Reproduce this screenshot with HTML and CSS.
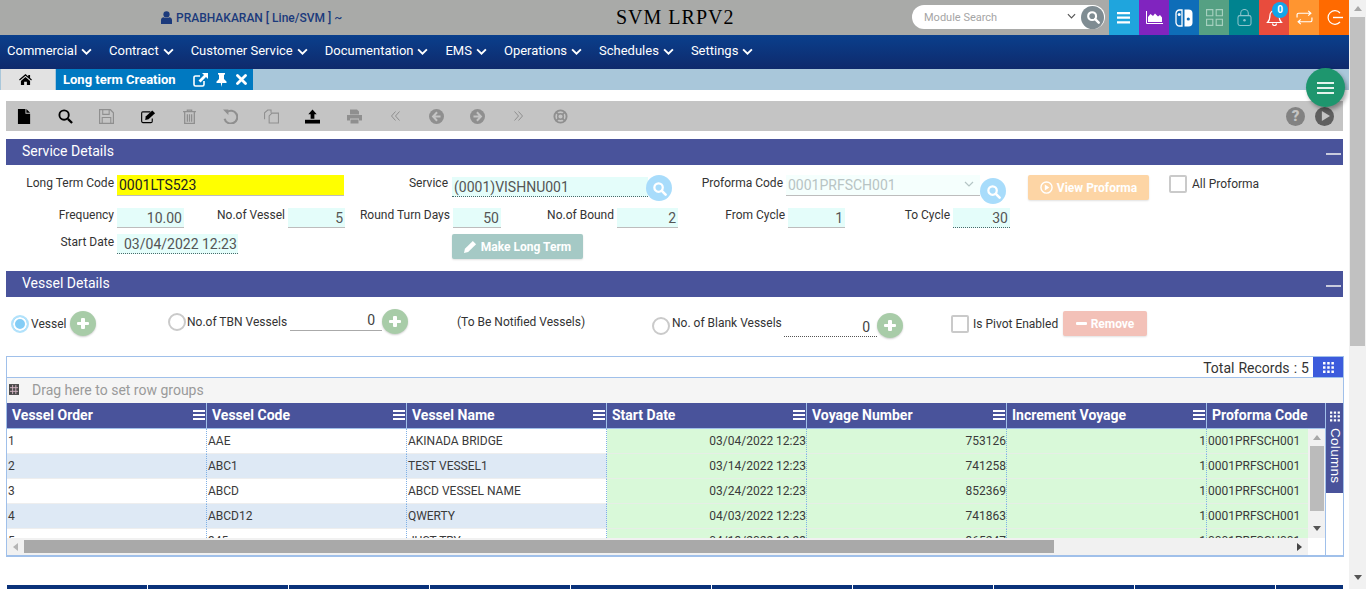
FILE: index.html
```html
<!DOCTYPE html>
<html lang="en">
<head>
    <meta charset="utf-8">
    <title>Long term Creation</title>
    <link rel="stylesheet" href="styles.css">
</head>
<body>
<div class="page">

    <header class="top-bar">
        <div class="user">
            <svg class="user-icon" viewBox="0 0 12 14"><circle cx="6" cy="3.6" r="3.4"/><path d="M0 14V9.8C0 7.8 1.4 6.9 3 6.7 4.6 8 7.4 8 9 6.7c1.600.2 3 1.100 3 3.100V14z"/></svg>
            <span>PRABHAKARAN [ Line/SVM ] ~</span>
        </div>
        <div class="app-title">SVM LRPV2</div>
        <div class="module-search">
            <span class="module-text">Module Search</span>
            <svg class="module-arrow" viewBox="0 0 10 6"><path d="M1 1l4 4 4-4" fill="none" stroke="#555" stroke-width="1.300"/></svg>
            <span class="module-btn">
                <svg viewBox="0 0 16 16"><circle cx="7" cy="7" r="4.500" fill="none" stroke="#fff" stroke-width="2.400"/><path d="M10.500 10.500l4 4" stroke="#fff" stroke-width="2.800" stroke-linecap="round"/></svg>
            </span>
        </div>
        <div class="tiles">
            <span class="tile tile-blue"><svg viewBox="0 0 14 12"><path d="M0 0h13v2.200H0zM0 4.600h13v2.200H0zM0 9.200h13v2.200H0z" fill="#fff"/></svg></span>
            <span class="tile tile-purple"><svg viewBox="0 0 17 13"><path d="M.5 0v12.500H17" fill="none" stroke="#fff"/><path d="M2 11V6l2.500-3 2.500 2 2-2.500 3 3 2-1.500 2 2.500V11z" fill="#fff"/></svg></span>
            <span class="tile tile-navy"><svg class="icon-switch" viewBox="0 0 18 18"><path d="M7 1H4.500A3.500 3.500 0 0 0 1 4.500v9A3.500 3.500 0 0 0 4.500 17H7z" fill="none" stroke="#fff" stroke-width="1.300"/><circle cx="4.200" cy="5.500" r="1.500" fill="#fff"/><path d="M9.500 .5h4A4 4 0 0 1 17.500 4.500v9a4 4 0 0 1-4 4h-4z" fill="#fff"/><circle cx="13.300" cy="10" r="1.600" fill="#0e6db8"/></svg></span>
            <span class="tile tile-green"><svg class="icon-large" viewBox="0 0 15 15"><path d="M.5.5h5.500v5.500H.5zM9 .5h5.500v5.500H9zM.5 9h5.500v5.500H.5zM9 9h5.500v5.500H9z" fill="none" stroke="#a6d0bf"/></svg></span>
            <span class="tile tile-teal"><svg class="icon-large" viewBox="0 0 15 18"><rect x=".6" y="7" width="13.800" height="10.400" rx="2" fill="none" stroke="#8cc4cc" stroke-width="1.100"/><path d="M3.500 7V4.500a4 4 0 0 1 8 0V7" fill="none" stroke="#8cc4cc" stroke-width="1.100"/><circle cx="7.500" cy="12" r="1.300" fill="#8cc4cc"/></svg></span>
            <span class="tile tile-red">
                <svg class="icon-large" viewBox="0 0 16 17"><path d="M8 1.500a4.500 4.500 0 0 0-4.500 4.500c0 4-1 6-2.500 7.500h14C13.500 12 12.500 10 12.500 6A4.500 4.500 0 0 0 8 1.500zM6 14.500a2 2 0 0 0 4 0" fill="none" stroke="#fff" stroke-width="1.200"/></svg>
                <span class="badge">0</span>
            </span>
            <span class="tile tile-orange"><svg class="icon-large" viewBox="0 0 16 14"><path d="M1 7V4.500A1.500 1.500 0 0 1 2.500 3H14M11.500 .8L14 3l-2.500 2.200M15 7v2.500A1.500 1.500 0 0 1 13.500 11H2M4.500 8.800L2 11l2.500 2.200" fill="none" stroke="#fff" stroke-width="1.100"/></svg></span>
            <span class="tile tile-flame"><svg class="icon-large" viewBox="0 0 17 17"><path d="M14 4a6.800 6.800 0 1 0 0 9" fill="none" stroke="#fff" stroke-width="1.200"/><path d="M7 8.500h10" stroke="#fff" stroke-width="1.400"/></svg></span>
        </div>
    </header>

    <nav class="main-nav">
        <a class="nav-item">Commercial <svg viewBox="0 0 10 6"><path d="M1 1l4 4 4-4"/></svg></a>
        <a class="nav-item">Contract <svg viewBox="0 0 10 6"><path d="M1 1l4 4 4-4"/></svg></a>
        <a class="nav-item">Customer Service <svg viewBox="0 0 10 6"><path d="M1 1l4 4 4-4"/></svg></a>
        <a class="nav-item">Documentation <svg viewBox="0 0 10 6"><path d="M1 1l4 4 4-4"/></svg></a>
        <a class="nav-item">EMS <svg viewBox="0 0 10 6"><path d="M1 1l4 4 4-4"/></svg></a>
        <a class="nav-item">Operations <svg viewBox="0 0 10 6"><path d="M1 1l4 4 4-4"/></svg></a>
        <a class="nav-item">Schedules <svg viewBox="0 0 10 6"><path d="M1 1l4 4 4-4"/></svg></a>
        <a class="nav-item">Settings <svg viewBox="0 0 10 6"><path d="M1 1l4 4 4-4"/></svg></a>
    </nav>

    <div class="tab-strip">
        <div class="tab-home"><svg viewBox="0 0 14 12"><path d="M7 0L0 6l.8 1L7 1.800 13.200 7l.8-1-2-1.700V1h-2v1.600zM2 7.500V12h3.500V8.500h3V12H12V7.500L7 3.300z"/></svg></div>
        <div class="tab-active">
            <span class="tab-title">Long term Creation</span>
            <svg class="tab-link" viewBox="0 0 15 14"><path d="M11 8v3.500a1.500 1.500 0 0 1-1.500 1.500h-7A1.500 1.500 0 0 1 1 11.500v-7A1.500 1.500 0 0 1 2.500 3H7" fill="none" stroke="#fff" stroke-width="1.600"/><path d="M9 0h6v6l-2-2-5.500 5.500-2-2L11 2z" fill="#fff"/></svg>
            <svg class="tab-pin" viewBox="0 0 11 14"><path d="M2 0h7v1.200L8 2v4l2.500 2.500V10H6.200L5.500 14 4.800 10H.5V8.500L3 6V2L2 1.200z" fill="#fff"/></svg>
            <svg class="tab-close" viewBox="0 0 11 11"><path d="M1.500 1.500l8 8M9.500 1.500l-8 8" stroke="#fff" stroke-width="2.800" stroke-linecap="round"/></svg>
        </div>
    </div>

    <div class="fab"><svg viewBox="0 0 17 12"><path d="M0 0h17v2H0zM0 5h17v2H0zM0 10h17v2H0z" fill="#e4f3ec"/></svg></div>

    <main class="content">
        <div class="toolbar">
            <div class="tool-group">
                <span class="tool"><svg viewBox="0 0 14 16"><path d="M0 0h8v5h5v11H0zM9 0l4 4H9z" fill="#000"/></svg></span>
                <span class="tool"><svg viewBox="0 0 16 16"><circle cx="6.500" cy="6.500" r="5" fill="none" stroke="#000" stroke-width="2"/><path d="M10.500 10.500l4.500 4.500" stroke="#000" stroke-width="2.400"/></svg></span>
                <span class="tool"><svg viewBox="0 0 14 14"><path d="M.5.5h10l3 3v10H.5z" fill="none" stroke="#8f8f8f" stroke-width="1.200"/><path d="M3.500 1v4h6V1M3 13V8h8v5" fill="none" stroke="#8f8f8f"/></svg></span>
                <span class="tool"><svg viewBox="0 0 16 14"><path d="M12 9v3a1.500 1.500 0 0 1-1.500 1.500h-8.500A1.500 1.500 0 0 1 .7 12V3.500A1.500 1.500 0 0 1 2 2h8" fill="none" stroke="#000" stroke-width="1.200"/><path d="M5 7l7-6.500 3 3-7 6.500-3.500.8z" fill="#000"/></svg></span>
                <span class="tool"><svg viewBox="0 0 12 14"><path d="M0 2.500h12M4 2.500V1h4v1.500M1.500 3v10.500h9V3M4 5v7M6 5v7M8 5v7" fill="none" stroke="#8f8f8f" stroke-width="1.200"/></svg></span>
                <span class="tool"><svg viewBox="0 0 14 14"><path d="M3.500 3A6 6 0 1 1 1.500 9" fill="none" stroke="#8f8f8f" stroke-width="2"/><path d="M0 .5h5v5z" fill="#8f8f8f"/></svg></span>
                <span class="tool"><svg viewBox="0 0 16 15"><path d="M.6 10.500V3.500L4 .6h3.500v3M5.500 14.400V6.800L8.500 3.900h6.900v10.500z" fill="none" stroke="#8f8f8f" stroke-width="1.100"/></svg></span>
                <span class="tool"><svg viewBox="0 0 16 15"><path d="M8 0l4.500 5H10v5H6V5H3.500z" fill="#000"/><path d="M0 11h16v4H0z" fill="#000"/></svg></span>
                <span class="tool"><svg viewBox="0 0 15 14"><path d="M3 5V0h7l2 2v3M0 5.500h15V11h-3V9H3v2H0zM3.500 10h8v4h-8z" fill="#8f8f8f"/></svg></span>
                <span class="tool"><svg class="icon-small" viewBox="0 0 9 10"><path d="M4.500 .5L.5 5l4 4.500M8.500 .5L4.500 5l4 4.500" fill="none" stroke="#8f8f8f"/></svg></span>
                <span class="tool"><svg viewBox="0 0 13 13"><circle cx="6.500" cy="6.500" r="6.500" fill="#8f8f8f"/><path d="M7 2.800L3.500 6.500 7 10.200M4 6.500h6" fill="none" stroke="#c4c4c4" stroke-width="1.700"/></svg></span>
                <span class="tool"><svg viewBox="0 0 13 13"><circle cx="6.500" cy="6.500" r="6.500" fill="#8f8f8f"/><path d="M6 2.800l3.500 3.700L6 10.200M9 6.500H3" fill="none" stroke="#c4c4c4" stroke-width="1.700"/></svg></span>
                <span class="tool"><svg class="icon-small" viewBox="0 0 9 10"><path d="M.5 .5l4 4.500-4 4.500M4.500 .5l4 4.500-4 4.500" fill="none" stroke="#8f8f8f"/></svg></span>
                <span class="tool"><svg viewBox="0 0 16 16"><circle cx="8" cy="8" r="6.500" fill="none" stroke="#8f8f8f" stroke-width="2"/><circle cx="8" cy="8" r="3" fill="none" stroke="#8f8f8f" stroke-width="1.500"/><path d="M3 3l3 3M13 3l-3 3M3 13l3-3M13 13l-3-3" stroke="#8f8f8f" stroke-width="1.800"/></svg></span>
            </div>
            <div class="tool-right">
                <span class="round-help">?</span>
                <span class="round-play"><svg viewBox="0 0 10 11"><path d="M1 0l9 5.500L1 11z" fill="#c4c4c4"/></svg></span>
            </div>
        </div>

        <section class="panel">
            <div class="panel-head"><span>Service Details</span><i class="collapse"></i></div>
            <div class="service-body">
                <div class="row-one">
                    <label class="lbl">Long Term Code</label>
                    <div class="inp inp-yellow">0001LTS523</div>
                    <label class="lbl lbl-service">Service</label>
                    <div class="inp inp-dotted inp-service">(0001)VISHNU001</div>
                    <span class="search-round search-first"><svg viewBox="0 0 16 16"><circle cx="7" cy="7" r="4.500" fill="none" stroke="#fff" stroke-width="2.400"/><path d="M10.500 10.500l4 4" stroke="#fff" stroke-width="2.800" stroke-linecap="round"/></svg></span>
                    <label class="lbl">Proforma Code</label>
                    <div class="inp inp-select">0001PRFSCH001<svg viewBox="0 0 10 6"><path d="M1 1l4 4 4-4" fill="none" stroke="#b5c5c5" stroke-width="1.200"/></svg></div>
                    <span class="search-round search-second"><svg viewBox="0 0 16 16"><circle cx="7" cy="7" r="4.500" fill="none" stroke="#fff" stroke-width="2.400"/><path d="M10.500 10.500l4 4" stroke="#fff" stroke-width="2.800" stroke-linecap="round"/></svg></span>
                    <span class="btn btn-peach"><svg viewBox="0 0 14 14"><circle cx="7" cy="7" r="6" fill="none" stroke="#fff" stroke-width="1.500"/><path d="M5.200 3.800L10 7l-4.800 3.200z" fill="#fff"/></svg>View Proforma</span>
                    <span class="check check-all"></span>
                    <span class="check-text">All Proforma</span>
                </div>
                <div class="row-two">
                    <label class="lbl">Frequency</label>
                    <div class="inp inp-num">10.00</div>
                    <label class="lbl">No.of Vessel</label>
                    <div class="inp inp-num">5</div>
                    <label class="lbl">Round Turn Days</label>
                    <div class="inp inp-num">50</div>
                    <label class="lbl">No.of Bound</label>
                    <div class="inp inp-num">2</div>
                    <label class="lbl">From Cycle</label>
                    <div class="inp inp-num">1</div>
                    <label class="lbl">To Cycle</label>
                    <div class="inp inp-num inp-dotted">30</div>
                </div>
                <div class="row-three">
                    <label class="lbl">Start Date</label>
                    <div class="inp inp-dotted inp-date">03/04/2022 12:23</div>
                    <span class="btn btn-teal"><svg viewBox="0 0 14 14"><path d="M0 14l1-4.500L9.500 1 13 4.500 4.500 13z" fill="#fff"/></svg>Make Long Term</span>
                </div>
            </div>
        </section>

        <section class="panel">
            <div class="panel-head"><span>Vessel Details</span><i class="collapse"></i></div>
            <div class="vessel-body">
                <div class="vessel-opt opt-vessel">
                    <span class="radio radio-on"></span><span class="opt-text">Vessel</span>
                    <span class="plus"></span>
                </div>
                <div class="vessel-opt opt-tbn">
                    <span class="radio"></span><span class="opt-text">No.of TBN Vessels</span>
                    <span class="count">0</span>
                    <span class="plus"></span>
                </div>
                <span class="tbn-note">(To Be Notified Vessels)</span>
                <div class="vessel-opt opt-blank">
                    <span class="radio"></span><span class="opt-text">No. of Blank Vessels</span>
                    <span class="count count-dotted">0</span>
                    <span class="plus"></span>
                </div>
                <div class="vessel-opt opt-pivot">
                    <span class="check"></span><span class="opt-text">Is Pivot Enabled</span>
                    <span class="btn btn-rose"><i class="minus"></i>Remove</span>
                </div>
            </div>
        </section>

        <section class="grid-box">
            <div class="grid-top">
                <span>Total Records : 5</span>
                <span class="grid-menu"><svg viewBox="0 0 11 11"><path d="M0 0h2.500v2.500H0zM4.200 0h2.500v2.500H4.200zM8.400 0h2.500v2.500H8.400zM0 4.200h2.500v2.500H0zM4.200 4.200h2.500v2.500H4.200zM8.400 4.200h2.500v2.500H8.400zM0 8.400h2.500v2.500H0zM4.200 8.400h2.500v2.500H4.200zM8.400 8.400h2.500v2.500H8.400z" fill="#fff"/></svg></span>
            </div>
            <div class="group-bar">
                <svg viewBox="0 0 11 12"><path d="M0 0h11v12H0z" fill="#4a4a4a"/><path d="M4 1v10M7.500 1v10M1 4h9M1 8h9" stroke="#d8b8c8" stroke-width="1"/></svg>
                <span>Drag here to set row groups</span>
            </div>
            <div class="grid-main">
                <div class="grid-left">
                    <div class="grid-head">
                        <div class="hcell">Vessel Order<i class="hmenu"></i></div>
                        <div class="hcell">Vessel Code<i class="hmenu"></i></div>
                        <div class="hcell">Vessel Name<i class="hmenu"></i></div>
                        <div class="hcell">Start Date<i class="hmenu"></i></div>
                        <div class="hcell">Voyage Number<i class="hmenu"></i></div>
                        <div class="hcell">Increment Voyage<i class="hmenu"></i></div>
                        <div class="hcell hcell-last">Proforma Code</div>
                    </div>
                    <div class="grid-view">
                        <div class="grid-rows">
                            <div class="grow"><div class="c">1</div><div class="c">AAE</div><div class="c">AKINADA BRIDGE</div><div class="c g r">03/04/2022 12:23</div><div class="c g r">753126</div><div class="c g r">1</div><div class="c g">0001PRFSCH001</div></div>
                            <div class="grow alt"><div class="c">2</div><div class="c">ABC1</div><div class="c">TEST VESSEL1</div><div class="c g r">03/14/2022 12:23</div><div class="c g r">741258</div><div class="c g r">1</div><div class="c g">0001PRFSCH001</div></div>
                            <div class="grow"><div class="c">3</div><div class="c">ABCD</div><div class="c">ABCD VESSEL NAME</div><div class="c g r">03/24/2022 12:23</div><div class="c g r">852369</div><div class="c g r">1</div><div class="c g">0001PRFSCH001</div></div>
                            <div class="grow alt"><div class="c">4</div><div class="c">ABCD12</div><div class="c">QWERTY</div><div class="c g r">04/03/2022 12:23</div><div class="c g r">741863</div><div class="c g r">1</div><div class="c g">0001PRFSCH001</div></div>
                            <div class="grow"><div class="c">5</div><div class="c">345</div><div class="c">JUST TRY</div><div class="c g r">04/13/2022 12:23</div><div class="c g r">365247</div><div class="c g r">1</div><div class="c g">0001PRFSCH001</div></div>
                        </div>
                        <div class="v-scroll">
                            <i class="arrow-up arrow-muted"></i>
                            <i class="v-thumb"></i>
                            <i class="arrow-down"></i>
                        </div>
                    </div>
                    <div class="h-row">
                        <div class="h-scroll">
                            <i class="arrow-left"></i>
                            <i class="h-thumb"></i>
                            <i class="arrow-right"></i>
                        </div>
                    </div>
                </div>
                <aside class="side-tools">
                    <div class="side-tab">
                        <svg viewBox="0 0 11 11"><path d="M0 0h2.500v2.500H0zM4.200 0h2.500v2.500H4.200zM8.400 0h2.500v2.500H8.400zM0 4.200h2.500v2.500H0zM4.200 4.200h2.500v2.500H4.200zM8.400 4.200h2.500v2.500H8.400zM0 8.400h2.500v2.500H0zM4.200 8.400h2.500v2.500H4.200zM8.400 8.400h2.500v2.500H8.400z" fill="#fff"/></svg>
                        <span>Columns</span>
                    </div>
                </aside>
            </div>
        </section>

        <div class="bottom-band">
            <i></i><i></i><i></i><i></i><i></i><i></i><i></i><i></i><i></i><i></i>
        </div>
    </main>
</div>

<div class="page-scroll">
    <i class="arrow-up arrow-muted"></i>
    <i class="page-thumb"></i>
    <i class="arrow-down"></i>
</div>
</body>
</html>
```

FILE: styles.css
```css
* {
    box-sizing: border-box;
}

html, body {
    margin: 0;
    height: 589px;
    overflow: hidden;
}

body {
    display: flex;
    font-family: Roboto, "Liberation Sans", sans-serif;
    font-size: 12px;
    color: #333;
    background: #fff;
}

svg {
    display: block;
}

.page {
    position: relative;
    width: 1349px;
    height: 589px;
    overflow: hidden;
}

/* top bar */
.top-bar {
    display: flex;
    align-items: center;
    height: 35px;
    background: #a9aaa8;
}

.user {
    display: flex;
    align-items: center;
    gap: 4px;
    width: 616px;
    padding-left: 161px;
    font-size: 12px;
    font-weight: 500;
    color: #1b3a7c;
}

.user-icon {
    width: 11px;
    height: 13px;
    fill: #1b3a7c;
}

.app-title {
    width: 296px;
    font-family: "Liberation Serif", serif;
    font-size: 20px;
    letter-spacing: 1px;
    color: #000;
}

.module-search {
    display: flex;
    align-items: center;
    width: 193px;
    height: 24px;
    margin-top: -1px;
    padding: 0 1px 0 12px;
    background: #fff;
    border-radius: 12px;
}

.module-text {
    flex: 1;
    font-size: 11px;
    color: #a5a5a5;
}

.module-arrow {
    width: 9px;
    height: 6px;
    margin: -3px 5px 0 0;
}

.module-btn {
    display: flex;
    align-items: center;
    justify-content: center;
    width: 23px;
    height: 23px;
    background: #7f8c92;
    border-radius: 50%;
}

.module-btn svg {
    width: 14px;
    height: 14px;
}

.tiles {
    display: flex;
    margin-left: 4px;
}

.tile {
    position: relative;
    display: flex;
    align-items: center;
    justify-content: center;
    width: 30px;
    height: 35px;
}

.tile svg {
    width: 14px;
    height: 12px;
}

.tile .icon-large {
    width: 17px;
    height: 17px;
}

.tile .icon-switch {
    width: 18px;
    height: 18px;
}

.tile-purple svg {
    width: 17px;
    height: 13px;
}

.tile-blue { background: #1fa5dd; }
.tile-purple { background: #8024bf; }
.tile-navy { background: #0e6db8; }
.tile-green { background: #55a083; }
.tile-teal { background: #00838f; }
.tile-red { background: #e84c3d; }
.tile-orange { background: #ff9530; }
.tile-flame { background: #ff6a00; }

.badge {
    position: absolute;
    top: 2px;
    left: 13px;
    width: 16px;
    height: 16px;
    font-size: 10px;
    font-weight: 700;
    line-height: 16px;
    text-align: center;
    color: #fff;
    background: #11a5ea;
    border-radius: 50%;
}

/* menu */
.main-nav {
    display: flex;
    align-items: center;
    gap: 17px;
    height: 34px;
    padding: 0 0 3px 7px;
    background: linear-gradient(#0a3f8c, #0f2a6c);
}

.nav-item {
    display: flex;
    align-items: center;
    gap: 4px;
    font-size: 13px;
    color: #fff;
}

.nav-item svg {
    width: 11px;
    height: 7px;
    margin-top: 2px;
    fill: none;
    stroke: #fff;
    stroke-width: 1.700;
}

/* tabs */
.tab-strip {
    display: flex;
    align-items: stretch;
    height: 21px;
    padding-left: 1px;
    background: #a9c7da;
}

.tab-home {
    display: flex;
    align-items: center;
    justify-content: center;
    width: 54px;
    margin-right: 1px;
    padding-right: 6px;
    background: #e2e2e2;
}

.tab-home svg {
    width: 13px;
    height: 11px;
    fill: #000;
}

.tab-active {
    display: flex;
    align-items: center;
    width: 197px;
    padding-left: 7px;
    background: #0079c1;
}

.tab-title {
    width: 130px;
    font-size: 13px;
    font-weight: 700;
    color: #fff;
}

.tab-link {
    width: 15px;
    height: 14px;
}

.tab-pin {
    width: 11px;
    height: 14px;
    margin-left: 8px;
}

.tab-close {
    width: 11px;
    height: 11px;
    margin-left: 9px;
}

.fab {
    position: absolute;
    top: 68px;
    left: 1306px;
    display: flex;
    align-items: center;
    justify-content: center;
    width: 39px;
    height: 39px;
    background: #1e966e;
    border-radius: 50%;
    box-shadow: 2px 3px 4px rgba(0, 0, 0, 0.35);
}

.fab svg {
    width: 17px;
    height: 12px;
}

/* page content */
.content {
    padding: 11px 6px 0;
}

.toolbar {
    display: flex;
    align-items: center;
    justify-content: space-between;
    height: 30px;
    background: #c4c4c4;
}

.tool-group {
    display: flex;
    align-items: center;
    margin-left: -2px;
}

.tool {
    display: flex;
    align-items: center;
    justify-content: center;
    width: 41.200px;
    height: 30px;
}

.tool svg {
    width: 15px;
    height: 15px;
}

.tool .icon-small {
    width: 9px;
    height: 10px;
}

.tool-right {
    display: flex;
    align-items: center;
    gap: 10px;
    padding-right: 9px;
}

.round-help {
    width: 19px;
    height: 19px;
    font-size: 15px;
    font-weight: 900;
    line-height: 19px;
    text-align: center;
    color: #c4c4c4;
    background: #828282;
    border-radius: 50%;
}

.round-play {
    display: flex;
    align-items: center;
    justify-content: center;
    width: 19px;
    height: 19px;
    padding-left: 2px;
    background: #5f5f5f;
    border-radius: 50%;
}

.round-play svg {
    width: 9px;
    height: 10px;
}

.panel {
    margin-top: 8px;
}

.panel + .panel {
    margin-top: 0;
}

.panel-head {
    display: flex;
    align-items: center;
    justify-content: space-between;
    height: 26px;
    padding: 0 2px 2px 16px;
    font-size: 14px;
    color: #fff;
    background: #49539b;
}

.collapse {
    width: 15px;
    height: 2px;
    margin-top: 6px;
    background: #c9cbdd;
}

/* service form */
.service-body {
    height: 106px;
    padding-top: 10px;
}

.row-one, .row-two, .row-three {
    display: grid;
    align-items: start;
}

.row-one {
    grid-template-columns: 111px 227px 108px 196px 24px 114px 194px 26px 143px 38px auto;
    height: 28px;
    margin-bottom: 5px;
}

.row-two {
    grid-template-columns: 111px 67px 104px 57px 108px 48px 116px 61px 110px 57px 108px 57px;
    height: 20px;
    margin-bottom: 6px;
}

.row-three {
    grid-template-columns: 111px 121px 214px 131px;
    height: 25px;
}

.lbl {
    padding: 1px 3px 0 0;
    text-align: right;
    white-space: nowrap;
    color: #333;
}

.row-two .lbl {
    padding-top: 0;
}

.lbl-service {
    padding-right: 4px;
}

.inp {
    height: 21px;
    padding: 0 2px;
    font-size: 14px;
    line-height: 20px;
    white-space: nowrap;
    color: #555;
    background: #e4fdfa;
    border-bottom: 1px solid #bdbdbd;
}

.inp-yellow {
    color: #222;
    background: #ffff00;
}

.inp-dotted {
    border-bottom: 1px dotted #4a6a6a;
}

.inp-service {
    margin-top: 2px;
    height: 20px;
}

.inp-select {
    display: flex;
    align-items: center;
    justify-content: space-between;
    padding-right: 6px;
    color: #b8c4c4;
    background: #f5fffd;
}

.inp-select svg {
    width: 10px;
    height: 6px;
    margin-top: -2px;
}

.inp-num {
    height: 20px;
    text-align: right;
}

.inp-date {
    height: 20px;
    padding-left: 7px;
}

.search-round {
    display: flex;
    align-items: center;
    justify-content: center;
    width: 26px;
    height: 26px;
    background: #a8dcfb;
    border-radius: 50%;
}

.search-round svg {
    width: 15px;
    height: 15px;
}

.search-first {
    margin-left: -2px;
}

.search-second {
    margin-top: 3px;
}

.btn {
    display: flex;
    align-items: center;
    justify-content: center;
    gap: 4px;
    height: 25px;
    font-size: 12px;
    font-weight: 700;
    color: #fff;
    border-radius: 2px;
    box-shadow: 0 1px 2px rgba(0, 0, 0, 0.12);
}

.btn svg {
    width: 13px;
    height: 13px;
}

.btn-peach {
    width: 121px;
    margin-left: 22px;
    background: #fdd5a5;
}

.check-all {
    margin-left: 20px;
}

.btn-teal {
    grid-column: 4;
    background: #a5c9c5;
}

.btn-rose {
    width: 84px;
    margin-left: 4px;
    background: #f3c1b8;
}

.minus {
    width: 11px;
    height: 3px;
    background: #fff;
    border-radius: 1px;
}

.check {
    display: block;
    width: 18px;
    height: 18px;
    background: #fff;
    border: 2px solid #cacaca;
    border-radius: 2px;
}

.check-text {
    padding: 2px 0 0 5px;
    white-space: nowrap;
}

/* vessel options */
.vessel-body {
    display: flex;
    align-items: flex-start;
    height: 59px;
}

.vessel-opt {
    display: flex;
    align-items: center;
    height: 25px;
}

.opt-vessel {
    width: 157px;
    margin: 14px 0 0 5px;
}

.opt-tbn {
    width: 289px;
    margin-top: 12px;
}

.tbn-note {
    width: 195px;
    margin-top: 18px;
}

.opt-blank {
    width: 299px;
    margin-top: 16px;
}

.opt-pivot {
    margin-top: 14px;
}

.radio {
    width: 18px;
    height: 18px;
    flex: none;
    background: #fff;
    border: 2px solid #cacaca;
    border-radius: 50%;
}

.radio-on {
    border-color: #b2e2fb;
    background: #84cdf6;
    box-shadow: inset 0 0 0 2px #fff;
}

.opt-text {
    padding-left: 2px;
    white-space: nowrap;
}

.opt-vessel .plus {
    margin-left: 4px;
}

.opt-tbn .opt-text {
    width: 104px;
    padding-left: 1px;
}

.opt-blank .opt-text {
    width: 114px;
    margin-top: -6px;
}

.opt-pivot .opt-text {
    width: 90px;
    padding-left: 4px;
}

.count {
    width: 92px;
    height: 21px;
    margin-top: -3px;
    padding-right: 7px;
    font-size: 14px;
    line-height: 21px;
    text-align: right;
    color: #444;
    border-bottom: 1px solid #aaa;
}

.count-dotted {
    width: 93px;
    height: 22px;
    margin-top: 0;
    line-height: 24px;
    border-bottom: 1px dotted #555;
}

.plus {
    position: relative;
    width: 26px;
    height: 25px;
    flex: none;
    background: #a8cca8;
    border-radius: 50%;
    box-shadow: 0 1px 2px rgba(0, 0, 0, 0.2);
}

.plus::before, .plus::after {
    content: "";
    position: absolute;
    background: #fff;
    border-radius: 1px;
}

.plus::before {
    top: 11px;
    left: 7px;
    width: 12px;
    height: 3px;
}

.plus::after {
    top: 7px;
    left: 11px;
    width: 4px;
    height: 11px;
}

/* data grid */
.grid-box {
    width: 1338px;
    height: 201px;
    border: 1px solid #a0c0ea;
    border-bottom-width: 2px;
}

.grid-top {
    display: flex;
    align-items: center;
    justify-content: flex-end;
    gap: 4px;
    height: 21px;
    padding-top: 1px;
    font-size: 14px;
    word-spacing: 0.600px;
    color: #333;
    border-bottom: 1px solid #a0c0ea;
}

.grid-menu {
    display: flex;
    align-items: center;
    justify-content: center;
    width: 30px;
    height: 20px;
    margin-top: -1px;
    background: #3c5bdc;
}

.grid-menu svg {
    width: 11px;
    height: 11px;
}

.group-bar {
    display: flex;
    align-items: center;
    height: 25px;
    padding: 0 0 2px 2px;
    font-size: 14px;
    color: #9a9a9a;
    background: #f5f5f5;
}

.group-bar svg {
    width: 10px;
    height: 11px;
    margin-right: 13px;
}

.grid-main {
    display: flex;
    height: 152px;
}

.grid-left {
    display: flex;
    flex-direction: column;
    width: 1318px;
}

.grid-head {
    display: grid;
    grid-template-columns: 200px 200px 200px 200px 200px 200px 118px;
    height: 26px;
    background: #49539b;
    border-bottom: 1px solid #a0c0ea;
}

.hcell {
    display: flex;
    align-items: center;
    justify-content: space-between;
    padding: 0 1px 2px 5px;
    font-size: 14px;
    font-weight: 700;
    white-space: nowrap;
    color: #fff;
    border-right: 1px solid #a0c0ea;
}

.hcell-last {
    border-right: 0;
}

.hmenu {
    position: relative;
    width: 12px;
    height: 10px;
    border-top: 2px solid #fff;
    border-bottom: 2px solid #fff;
}

.hmenu::after {
    content: "";
    position: absolute;
    top: 2px;
    left: 0;
    width: 12px;
    height: 2px;
    background: #fff;
}

.grid-view {
    display: flex;
    height: 109px;
    overflow: hidden;
}

.grid-rows {
    width: 1301px;
    height: 109px;
    overflow: hidden;
}

.grow {
    display: grid;
    grid-template-columns: 200px 200px 200px 200px 200px 200px 101px;
    height: 25px;
}

.c {
    padding: 0 0 0 1px;
    line-height: 24px;
    font-size: 12px;
    white-space: nowrap;
    color: #3a3a3a;
    background: #fff;
    border-right: 1px dotted #7fb0e6;
    border-bottom: 1px solid #eee;
}

.alt .c {
    background: #dee9f5;
}

.c:last-child {
    border-right: 0;
}

.alt .c.g, .c.g {
    background: #d9f9d9;
    border-bottom-color: #e6eee6;
}

.r {
    text-align: right;
}

.v-scroll, .page-scroll, .h-scroll {
    position: relative;
    background: #f1f1f1;
}

.v-scroll {
    display: flex;
    flex-direction: column;
    align-items: center;
    width: 17px;
}

.v-thumb {
    width: 14px;
    height: 65px;
    margin-top: 6px;
    background: #bbb;
}

.arrow-up, .arrow-down {
    width: 0;
    height: 0;
    border-left: 4px solid transparent;
    border-right: 4px solid transparent;
}

.arrow-up {
    margin-top: 6px;
    border-bottom: 5px solid #555;
}

.arrow-down {
    margin-top: 15px;
    border-top: 5px solid #555;
}

.arrow-muted {
    border-bottom-color: #a8a8a8;
}

.h-row {
    height: 17px;
}

.h-scroll {
    display: flex;
    align-items: center;
    width: 1301px;
    height: 17px;
}

.arrow-left, .arrow-right {
    width: 0;
    height: 0;
    border-top: 4px solid transparent;
    border-bottom: 4px solid transparent;
}

.arrow-left {
    margin-left: 6px;
    border-right: 5px solid #b5b5b5;
}

.h-thumb {
    width: 1030px;
    height: 13px;
    margin-left: 6px;
    background: #a9a9a9;
}

.arrow-right {
    margin-left: 243px;
    border-left: 5px solid #444;
}

.side-tools {
    width: 18px;
    border-left: 1px solid #a0c0ea;
}

.side-tab {
    display: flex;
    flex-direction: column;
    align-items: center;
    height: 90px;
    padding-top: 8px;
    color: #fff;
    background: #49539b;
}

.side-tab svg {
    width: 10px;
    height: 11px;
    margin-bottom: 6px;
}

.side-tab span {
    font-family: "Liberation Sans", sans-serif;
    font-size: 13.500px;
    letter-spacing: 0.300px;
    line-height: 16px;
    writing-mode: vertical-rl;
}

.bottom-band {
    display: grid;
    grid-template-columns: repeat(9, 141px) 1fr;
    height: 4px;
    margin: 28px 0 0 1px;
}

.bottom-band i {
    display: block;
    background: #0a327a;
    border-right: 1px solid #fff;
}

.bottom-band i:last-child {
    border-right: 0;
}

/* page scrollbar */
.page-scroll {
    display: flex;
    flex-direction: column;
    align-items: center;
    width: 17px;
    height: 589px;
}

.page-thumb {
    width: 15px;
    height: 329px;
    margin-top: 6px;
    background: #c1c1c1;
}

.page-scroll .arrow-down {
    margin-top: 229px;
}
```
